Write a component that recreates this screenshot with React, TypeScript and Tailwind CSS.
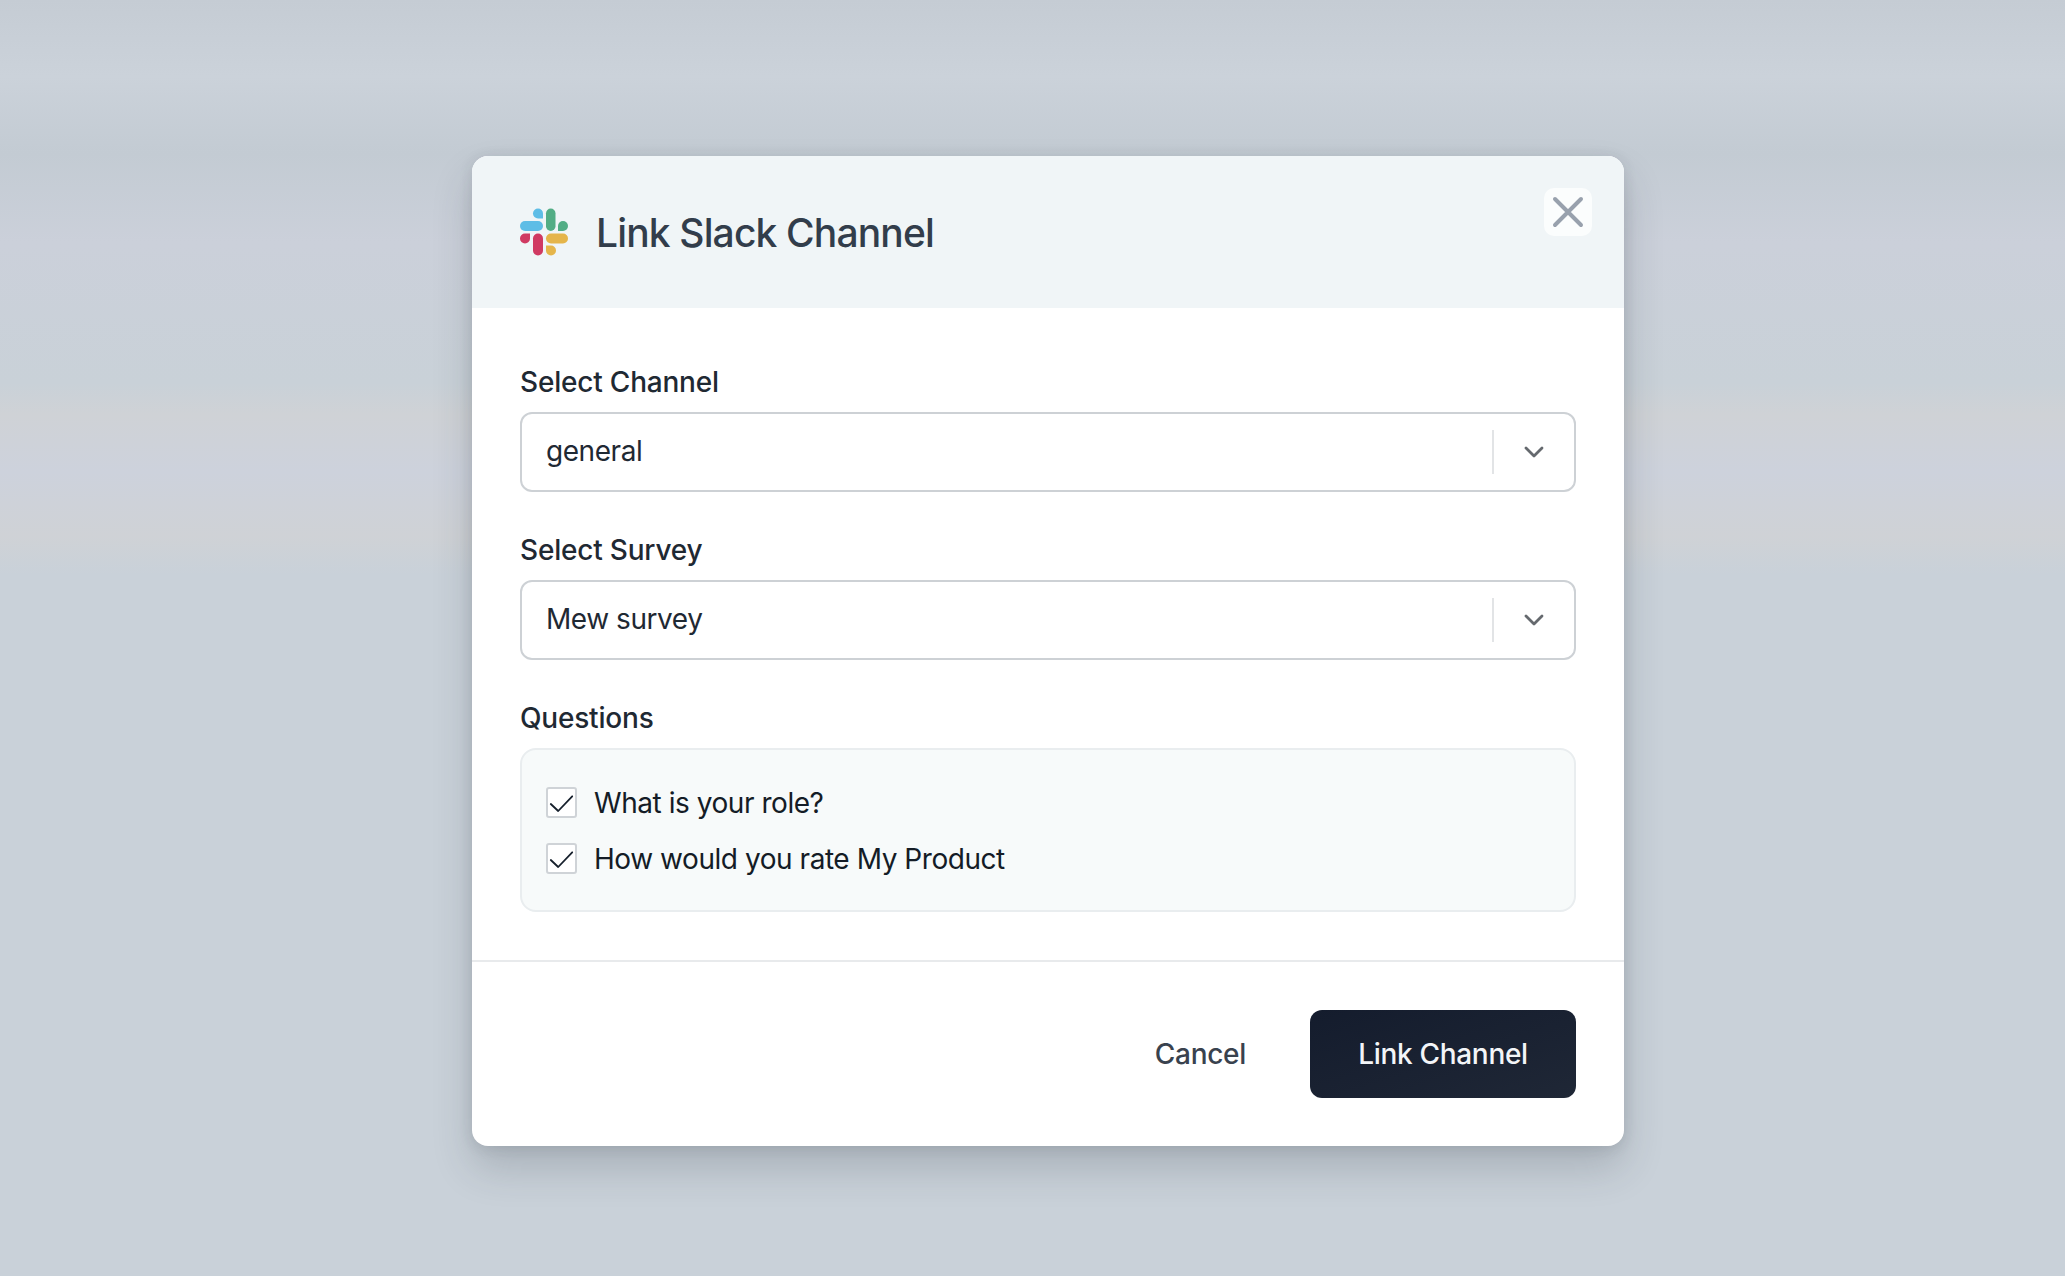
import React from 'react';

const font = "font-['Inter','Noto_Sans',sans-serif]";

function SlackLogo() {
  return (
    <svg width="48" height="48" viewBox="0 0 48 48" fill="none">
      <path d="M18 0.500a5 5 0 0 0 0 10h5v-5a5 5 0 0 0-5-5z" fill="#5ebde6" />
      <rect x="0" y="13" width="23" height="10" rx="5" fill="#5ebde6" />
      <rect x="26" y="0.500" width="9.500" height="22.500" rx="4.750" fill="#52ad85" />
      <path d="M43 13a5 5 0 0 0-5 5v5h5a5 5 0 0 0 0-10z" fill="#52ad85" />
      <path d="M5 25.500a5 5 0 0 0 0 10a5 5 0 0 0 5-5v-5z" fill="#d03a62" />
      <rect x="13" y="25.500" width="10" height="22" rx="5" fill="#d03a62" />
      <rect x="26" y="25.500" width="22" height="10" rx="5" fill="#e5b54a" />
      <path d="M26 37.500v5a5 5 0 1 0 5-5z" fill="#e5b54a" />
    </svg>
  );
}

function Chevron() {
  return (
    <svg width="24" height="24" viewBox="0 0 24 24" fill="none" stroke="#65696e" strokeWidth="2.800" strokeLinecap="round" strokeLinejoin="round">
      <path d="M4 8l8 8 8-8" />
    </svg>
  );
}

function Select({ label, value }: { label: string; value: string }) {
  return (
    <div className="flex flex-col gap-[10px]">
      <div className="text-[28px] leading-[40px] font-medium tracking-[-0.2px] text-[#1f2933]">{label}</div>
      <div className="flex h-[80px] items-center rounded-[12px] border-2 border-[#cdd1d5] bg-white pl-[24px] pr-[28px]">
        <span className="flex-1 pb-[2px] text-[28px] tracking-[-0.45px] text-[#1f2933]">{value}</span>
        <span className="h-[44px] w-[2px] bg-[#e2e4e6]" />
        <span className="ml-[28px] flex"><Chevron /></span>
      </div>
    </div>
  );
}

function Question({ text }: { text: string }) {
  return (
    <div className="flex h-[40px] items-center gap-[17px]">
      <span className="flex h-[31px] w-[31px] items-center justify-center rounded-[3px] border-2 border-[#cfd3d7] bg-white">
        <svg width="27" height="27" viewBox="0 0 27 27" fill="none" stroke="#16202c" strokeWidth="1.800" strokeLinecap="round" strokeLinejoin="round">
          <path d="M2.800 15l7.400 7L24.200 7.300" />
        </svg>
      </span>
      <span className="pt-[1px] text-[28px] tracking-[-0.45px] text-[#141c26]">{text}</span>
    </div>
  );
}

export default function App() {
  return (
    <div className={`${font} flex h-[1276px] w-full items-start justify-center bg-[linear-gradient(180deg,#c5ccd4_0%,#cbd2da_6%,#c3cbd3_12%,#cbd0da_19%,#c9d1d8_30%,#cfd2d6_32.5%,#cdd2dc_37%,#cfd2d6_42%,#c9d1d9_45%,#c9d1d9_100%)] pl-[31px] pt-[156px]`}>
      <div className="w-[1152px] overflow-hidden rounded-[16px] bg-white shadow-[0_22px_40px_rgba(40,50,60,0.2),0_2px_14px_rgba(40,50,60,0.12)]">
        <div className="flex h-[152px] items-center gap-[28px] bg-[#f0f5f7] pl-[48px] pr-[32px]">
          <SlackLogo />
          <h1 className="flex-1 pt-[2px] text-[39px] font-medium tracking-[-0.85px] text-[#323d4b]">Link Slack Channel</h1>
          <button className="mb-[40px] flex h-[48px] w-[48px] items-center justify-center rounded-[10px] bg-[#fbfdfd]">
            <svg width="36" height="36" viewBox="0 0 36 36" fill="none" stroke="#98a1ad" strokeWidth="4" strokeLinecap="round">
              <path d="M5 5l26 26M31 5L5 31" />
            </svg>
          </button>
        </div>
        <div className="flex flex-col gap-[38px] px-[48px] pb-[48px] pt-[54px]">
          <Select label="Select Channel" value="general" />
          <Select label="Select Survey" value="Mew survey" />
          <div className="flex flex-col gap-[10px]">
            <div className="text-[28px] leading-[40px] font-medium tracking-[-0.2px] text-[#1f2933]">Questions</div>
            <div className="flex flex-col gap-[16px] rounded-[16px] border-2 border-[#e9edef] bg-[#f7fafa] px-[24px] py-[32px]">
              <Question text="What is your role?" />
              <Question text="How would you rate My Product" />
            </div>
          </div>
        </div>
        <div className="flex items-center justify-end gap-[64px] border-t-2 border-[#e8eaec] p-[48px]">
          <button className="text-[28px] font-medium tracking-[-0.3px] text-[#39424e]">Cancel</button>
          <button className="flex h-[88px] w-[266px] items-center justify-center rounded-[12px] bg-linear-to-br from-[#141c2d] to-[#1f2736] text-[28px] font-medium tracking-[-0.3px] text-[#f3f5f8]">Link Channel</button>
        </div>
      </div>
    </div>
  );
}
